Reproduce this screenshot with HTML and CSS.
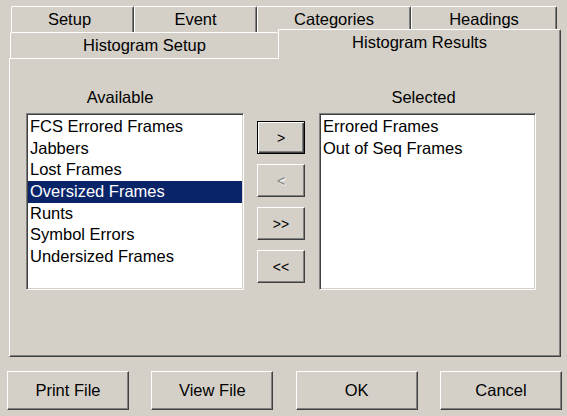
FILE: index.html
```html
<!DOCTYPE html>
<html>
<head>
<meta charset="utf-8">
<link rel="stylesheet" href="styles.css">
</head>
<body>
<div class="window">
  <div class="tabrow tabrow-back">
    <div class="tab t-setup">Setup</div>
    <div class="tab t-event">Event</div>
    <div class="tab t-cat">Categories</div>
    <div class="tab t-head">Headings</div>
  </div>
  <div class="tabrow tabrow-front">
    <div class="tab t-hsetup">Histogram Setup</div>
    <div class="tab t-hres active">Histogram Results</div>
  </div>
  <div class="panel">
    <div class="grid">
      <div class="label label-avail">Available</div>
      <div></div>
      <div class="label label-sel">Selected</div>
      <div class="list">
        <div class="item">FCS Errored Frames</div>
        <div class="item">Jabbers</div>
        <div class="item">Lost Frames</div>
        <div class="item sel">Oversized Frames</div>
        <div class="item">Runts</div>
        <div class="item">Symbol Errors</div>
        <div class="item">Undersized Frames</div>
      </div>
      <div class="movers">
        <div class="btn small default">&gt;</div>
        <div class="btn small disabled">&lt;</div>
        <div class="btn small">&gt;&gt;</div>
        <div class="btn small">&lt;&lt;</div>
      </div>
      <div class="list">
        <div class="item">Errored Frames</div>
        <div class="item">Out of Seq Frames</div>
      </div>
    </div>
  </div>
  <div class="actions">
    <div class="btn big">Print File</div>
    <div class="btn big">View File</div>
    <div class="btn big">OK</div>
    <div class="btn big">Cancel</div>
  </div>
</div>
</body>
</html>
```

FILE: styles.css
```css
html, body {
  margin: 0;
  padding: 0;
  background: #d4d0c8;
}
body {
  font-family: "Liberation Sans", Arial, sans-serif;
  font-size: 16.5px;
  color: #000;
  width: 567px;
  height: 416px;
  overflow: hidden;
}
.window {
  padding-top: 6px;
}
.tabrow {
  display: flex;
}
.tabrow-back {
  margin-left: 11px;
  height: 26px;
}
.tab {
  box-sizing: border-box;
  background: #d4d0c8;
  border-top: 1px solid #fff;
  border-left: 1px solid #fff;
  border-right: 1px solid #404040;
  box-shadow: inset -1px 0 0 #808080;
  border-top-left-radius: 2px;
  border-top-right-radius: 2px;
  display: flex;
  align-items: center;
  justify-content: center;
  white-space: nowrap;
}
.t-setup { width: 123px; padding-right: 6px; }
.t-event { width: 123px; }
.t-cat { width: 154px; }
.t-head { width: 146px; }
.tabrow-front {
  margin-left: 10px;
  margin-top: -3px;
  height: 29px;
  align-items: flex-end;
}
.t-hsetup {
  width: 268px;
  height: 26px;
  border-right: none;
  box-shadow: none;
  padding-bottom: 1px;
}
.t-hres {
  width: 283px;
  height: 30px;
  margin-bottom: -1px;
  position: relative;
  z-index: 1;
  padding-bottom: 4px;
}
.panel {
  box-sizing: border-box;
  margin-left: 9px;
  width: 552px;
  height: 299px;
  border-top: 1px solid #fff;
  border-left: 1px solid #fff;
  border-right: 1px solid #404040;
  border-bottom: 1px solid #404040;
  box-shadow: inset -1px -1px 0 #808080;
  padding: 29px 0 0 16px;
}
.grid {
  display: grid;
  grid-template-columns: 218px 48px 218px;
  grid-template-rows: 19px 177px;
  column-gap: 13px;
  row-gap: 6px;
}
.grid > :nth-child(3n) {
  margin-left: 1px;
}
.label {
  text-align: center;
  line-height: 19px;
}
.label-avail {
  padding-right: 30px;
}
.label-sel {
  padding-right: 8px;
}
.list {
  box-sizing: border-box;
  background: #fff;
  border-top: 1px solid #808080;
  border-left: 1px solid #808080;
  border-right: 1px solid #fff;
  border-bottom: 1px solid #fff;
  box-shadow: inset 1px 1px 0 #404040, inset -1px -1px 0 #d4d0c8;
  padding: 2px 1px 1px 1px;
}
.item {
  height: 21.65px;
  line-height: 21.65px;
  padding-left: 2px;
  white-space: nowrap;
}
.item.sel {
  background: #0a246a;
  color: #fff;
}
.movers {
  display: flex;
  flex-direction: column;
  padding-top: 8px;
  gap: 10px;
}
.btn {
  box-sizing: border-box;
  background: #d4d0c8;
  border-top: 1px solid #fff;
  border-left: 1px solid #fff;
  border-right: 1px solid #404040;
  border-bottom: 1px solid #404040;
  box-shadow: inset -1px -1px 0 #808080;
  display: flex;
  align-items: center;
  justify-content: center;
  white-space: nowrap;
}
.btn.small {
  width: 48px;
  height: 33px;
  font-size: 14px;
}
.btn.default {
  border: 1px solid #000;
  box-shadow: inset 1px 1px 0 #fff, inset -1px -1px 0 #404040, inset -2px -2px 0 #808080;
}
.btn.disabled {
  color: #808080;
  text-shadow: 1px 1px 0 #fff;
}
.actions {
  display: flex;
  justify-content: space-between;
  padding: 14px 5px 0 7px;
}
.btn.big {
  width: 122px;
  height: 39px;
}
```
